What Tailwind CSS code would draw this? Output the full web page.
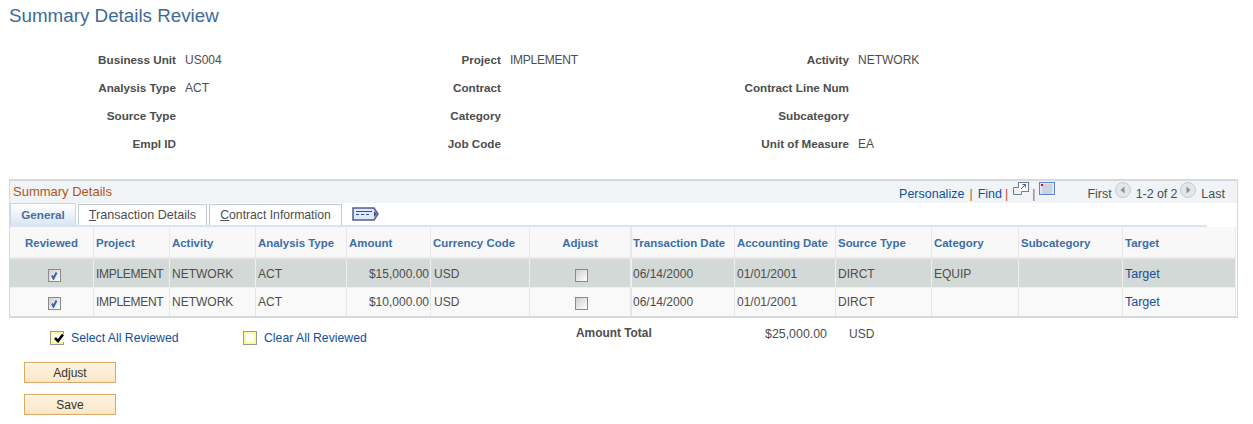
<!DOCTYPE html>
<html lang="en">
<head>
    <meta charset="UTF-8" />
    <title>Summary Details Review</title>
    <script src="https://cdn.jsdelivr.net/npm/@tailwindcss/browser@4"></script>
</head>
<body class="bg-white font-['Liberation_Sans',Arial,sans-serif] text-[12px] text-[#4d4d4d] overflow-hidden">
    <div class="h-[424px] w-[1253px]">
    <h1 class="pl-[9px] pt-[3px] h-[46px] text-[18.8px] leading-[26px] text-[#3e6a9b]">Summary Details Review</h1>

    <!-- header fields -->
    <div class="grid grid-cols-[176px_149px_176px_172px_176px_1fr] auto-rows-[28px] h-[133px] items-center [&>b]:text-[11.7px] [&>b]:text-right [&>span]:pl-[9px]">
        <b>Business Unit</b><span>US004</span>
        <b>Project</b><span class="tracking-[-0.25px]">IMPLEMENT</span>
        <b>Activity</b><span>NETWORK</span>
        <b>Analysis Type</b><span>ACT</span>
        <b>Contract</b><span></span>
        <b>Contract Line Num</b><span></span>
        <b>Source Type</b><span></span>
        <b>Category</b><span></span>
        <b>Subcategory</b><span></span>
        <b>Empl ID</b><span></span>
        <b>Job Code</b><span></span>
        <b>Unit of Measure</b><span>EA</span>
    </div>

    <!-- grid -->
    <div class="ml-[9px] w-[1229px] h-[139px] border-t-2 border-x border-b-2 border-[#d5d9dc]">
        <div class="h-[22px] bg-[#f1f4f6] flex items-center justify-between pl-[3px] pr-[12px] text-[12.5px]">
            <span class="text-[13px] text-[#b0561a]">Summary Details</span>
            <div class="flex items-center pt-[4px]">
                <a class="text-[#12509c]">Personalize</a>
                <span class="mx-[5px] text-[#c0502d]">|</span>
                <a class="text-[#12509c]">Find</a>
                <span class="ml-[3px] mr-[5px] text-[#c0502d]">|</span>
                <svg class="w-[16px] h-[13px] -mt-[11px]" viewBox="0 0 16 13" fill="none">
                    <rect x="5.5" y="0.5" width="10" height="9" fill="#fff" stroke="#6d7f96"/>
                    <path d="M5.5 5.5H0.5V12.5H8.5V9.5" fill="#eef2f6" stroke="#6d7f96"/>
                    <path d="M8 7L12.5 2.5M9.5 2.5H12.5V5.5" stroke="#4d6684"/>
                </svg>
                <span class="ml-[3px] mr-[4px] text-[#c0502d]">|</span>
                <svg class="w-[16px] h-[13px] -mt-[11px]" viewBox="0 0 16 13">
                    <rect x="0.5" y="0.5" width="15" height="12" fill="#dfe6f4" stroke="#5b86c9"/>
                    <path d="M3 3h10M3 5h10M3 7h10M3 9h10M3 11h10" stroke="#8f98a6"/>
                    <path d="M4 2v10M6 2v10M8 2v10M10 2v10M12 2v10" stroke="#dfe6f4"/>
                    <rect x="2" y="2" width="2" height="2" fill="#e8000b"/>
                </svg>
                <span class="ml-[32px]">First</span>
                <svg class="w-[16px] h-[16px] ml-[3px] mr-[5px] -mt-[9px]" viewBox="0 0 16 16">
                    <circle cx="8" cy="8" r="7.5" fill="#e4e6e8" stroke="#c6cacd"/>
                    <path d="M9.5 4.5v7L5.5 8z" fill="#8a8f95"/>
                </svg>
                <span class="tracking-[-0.1px]">1-2 of 2</span>
                <svg class="w-[16px] h-[16px] ml-[3px] mr-[5px] -mt-[9px]" viewBox="0 0 16 16">
                    <circle cx="8" cy="8" r="7.5" fill="#e4e6e8" stroke="#c6cacd"/>
                    <path d="M6.5 4.5v7L10.5 8z" fill="#8a8f95"/>
                </svg>
                <span>Last</span>
            </div>
        </div>

        <!-- tabs -->
        <div class="h-[24px] flex items-end w-[1197px] border-b-2 border-[#dbe5f2]">
            <div class="h-[22px] w-[66px] border border-b-0 border-[#c9d6e6] bg-gradient-to-b from-white to-[#dbe6f3] text-[#4a6f9a] text-[11.7px] font-bold flex items-center justify-center">General</div>
            <div class="h-[21px] w-[129px] ml-[2px] border border-b-0 border-[#c3c9d1] text-[12.6px] flex items-center justify-center"><span><u>T</u>ransaction Details</span></div>
            <div class="h-[21px] w-[133px] ml-[2px] border border-b-0 border-[#c3c9d1] text-[12.2px] flex items-center justify-center"><span><u>C</u>ontract Information</span></div>
            <svg class="w-[27px] h-[14px] ml-[10px] mb-[4px]" viewBox="0 0 27 14">
                <path d="M1 1H22L26 7L22 13H1z" fill="#dfe8fb" stroke="#545e8c" stroke-width="1.5"/>
                <path d="M4 4.5H20M4 7.5h3M9 7.5h3M14 7.5h3" stroke="#3d4c8e"/>
                <path d="M22 4v6l3-3z" fill="#3d4c8e"/>
            </svg>
        </div>

        <table class="table-fixed w-[1226px] border-separate border-spacing-0">
            <colgroup>
                <col class="w-[84px]"><col class="w-[76px]"><col class="w-[86px]"><col class="w-[91px]"><col class="w-[84px]"><col class="w-[99px]"><col class="w-[102px]"><col class="w-[103px]"><col class="w-[101px]"><col class="w-[96px]"><col class="w-[87px]"><col class="w-[104px]"><col class="w-[113px]">
            </colgroup>
            <thead>
                <tr class="h-[32px] bg-[#f8f8f8] text-left text-[11.45px] text-[#3b6ea8] [&>th]:border-r [&>th]:border-b-2 [&>th]:border-[#e8e8e8] [&>th]:pl-[2px] [&>th]:pt-[3px] [&>th]:font-bold [&>th]:whitespace-nowrap">
                    <th class="!pl-0 text-center">Reviewed</th>
                    <th>Project</th>
                    <th>Activity</th>
                    <th>Analysis Type</th>
                    <th>Amount</th>
                    <th>Currency Code</th>
                    <th class="!pl-0 !border-r-2 text-center">Adjust</th>
                    <th class="!pl-[1px]">Transaction Date</th>
                    <th>Accounting Date</th>
                    <th>Source Type</th>
                    <th>Category</th>
                    <th>Subcategory</th>
                    <th>Target</th>
                </tr>
            </thead>
            <tbody>
                <tr class="h-[29px] bg-[#d3d9d7] [&>td]:border-r [&>td]:border-b [&>td]:border-[#eeeeee] [&>td]:pl-[2px] [&>td]:pt-[1px] [&>td]:whitespace-nowrap">
                    <td class="!pl-0"><div class="ml-[38px] mt-[3px] w-[13px] h-[13px] border border-[#8a8a8a] bg-gradient-to-br from-[#cfcfcf] to-white flex items-center justify-center"><svg class="w-[9px] h-[9px]" viewBox="0 0 9 9"><path d="M2 4.5L3.5 7.5L6.5 1.5" fill="none" stroke="#3a63a8" stroke-width="2"/></svg></div></td>
                    <td class="tracking-[-0.3px]">IMPLEMENT</td><td>NETWORK</td><td>ACT</td>
                    <td class="text-right !pr-[1px]">$15,000.00</td><td class="!pl-[3px]">USD</td>
                    <td class="!pl-0 !border-r-2"><div class="ml-[45px] mt-[3px] w-[13px] h-[13px] border border-[#8a8a8a] bg-gradient-to-br from-[#cfcfcf] to-white"></div></td>
                    <td class="!pl-[1px]">06/14/2000</td><td>01/01/2001</td><td>DIRCT</td><td>EQUIP</td><td></td>
                    <td class="text-[#12509c] text-[12.5px] !pt-[3px]">Target</td>
                </tr>
                <tr class="h-[28px] bg-[#f9f9f9] [&>td]:border-r [&>td]:border-[#e6e6e6] [&>td]:pl-[2px] [&>td]:whitespace-nowrap">
                    <td class="!pl-0"><div class="ml-[38px] mt-[3px] w-[13px] h-[13px] border border-[#8a8a8a] bg-gradient-to-br from-[#cfcfcf] to-white flex items-center justify-center"><svg class="w-[9px] h-[9px]" viewBox="0 0 9 9"><path d="M2 4.5L3.5 7.5L6.5 1.5" fill="none" stroke="#3a63a8" stroke-width="2"/></svg></div></td>
                    <td class="tracking-[-0.3px]">IMPLEMENT</td><td>NETWORK</td><td>ACT</td>
                    <td class="text-right !pr-[1px]">$10,000.00</td><td class="!pl-[3px]">USD</td>
                    <td class="!pl-0 !border-r-2"><div class="ml-[45px] mt-[3px] w-[13px] h-[13px] border border-[#8a8a8a] bg-gradient-to-br from-[#cfcfcf] to-white"></div></td>
                    <td class="!pl-[1px]">06/14/2000</td><td>01/01/2001</td><td>DIRCT</td><td></td><td></td>
                    <td class="text-[#12509c] text-[12.5px]">Target</td>
                </tr>
            </tbody>
        </table>
    </div>

    <!-- totals and select links -->
    <div class="flex h-[44px] pt-[6px] items-start">
        <div class="ml-[50px] mt-[5px] flex items-center w-[193px]">
            <span class="w-[14px] h-[14px] border border-[#999999] bg-[#fbfb9c] p-[2px] flex"><span class="flex-1 bg-white flex items-center justify-center"><svg class="w-[12px] h-[12px] shrink-0" viewBox="0 0 12 12"><path d="M2 6L5 9L10 2.5" fill="none" stroke="#000" stroke-width="2.6"/></svg></span></span>
            <a class="ml-[7px] text-[12.25px] text-[#12509c]">Select All Reviewed</a>
        </div>
        <div class="mt-[5px] flex items-center w-[333px]">
            <span class="w-[14px] h-[14px] border border-[#999999] bg-[#fbfb9c] p-[2px] flex"><span class="flex-1 bg-white"></span></span>
            <a class="ml-[7px] text-[12.25px] text-[#12509c]">Clear All Reviewed</a>
        </div>
        <b class="w-[100px] mt-[1px] text-[11.9px]">Amount Total</b>
        <span class="w-[151px] mt-[1px] text-[12.4px] text-right">$25,000.00</span>
        <span class="ml-[22px] mt-[1px]">USD</span>
    </div>

    <!-- buttons -->
    <div class="ml-[24px] flex flex-col gap-[11px]">
        <button class="w-[92px] h-[21px] border border-[#e0a868] bg-gradient-to-b from-[#fdf4e2] to-[#fbe7c6] text-[#333]">Adjust</button>
        <button class="w-[92px] h-[21px] border border-[#e0a868] bg-gradient-to-b from-[#fdf4e2] to-[#fbe7c6] text-[#333]">Save</button>
    </div>
    </div>
</body>
</html>
